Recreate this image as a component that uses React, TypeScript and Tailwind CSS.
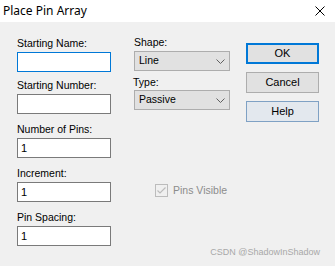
import React from "react";

const ui = { fontFamily: '"Liberation Sans", Arial, sans-serif' };

const fields = [
  { label: "Starting Name:", value: "", focus: true, mt: "mt-[15px]" },
  { label: "Starting Number:", value: "", focus: false, mt: "mt-[7px]" },
  { label: "Number of Pins:", value: "1", focus: false, mt: "mt-[9px]" },
  { label: "Increment:", value: "1", focus: false, mt: "mt-[9px]" },
  { label: "Pin Spacing:", value: "1", focus: false, mt: "mt-[9px]" },
];

const Chevron = () => (
  <svg width="9" height="5" viewBox="0 0 9 5" className="mr-[4px]">
    <path d="M0.5 0.5 L4.5 4.5 L8.5 0.5" fill="none" stroke="#606060" strokeWidth="1" />
  </svg>
);

const Select = ({ value }: { value: string }) => (
  <div className="flex h-[20px] w-[96px] items-center justify-between border border-[#adadad] bg-[#e1e1e1] pl-[4px] text-[10.5px] text-black">
    <span>{value}</span>
    <Chevron />
  </div>
);

const App = () => {
  return (
    <div className="h-[266px] w-[335px] overflow-hidden bg-[#f0f0f0] text-black" style={ui}>
      {/* Title bar */}
      <div className="flex h-[22px] items-center justify-between bg-white pl-[3px] pr-[10px]">
        <span className="text-[12px] leading-none text-black" style={{ fontFamily: '"Noto Sans", "Open Sans", sans-serif' }}>
          Place Pin Array
        </span>
        <svg width="10" height="10" viewBox="0 0 10 10">
          <path d="M0.5 0.5 L9.5 9.5 M9.5 0.5 L0.5 9.5" stroke="#000" strokeWidth="1" />
        </svg>
      </div>

      <div className="relative flex">
        {/* Left column */}
        <div className="ml-[17px] flex w-[94px] flex-col">
          {fields.map((f) => (
            <div key={f.label} className={f.mt}>
              <div className="mb-[2px] text-[10.5px] leading-[13px]">{f.label}</div>
              <div
                className={`flex h-[20px] items-center bg-white pl-[3px] text-[11px] ${
                  f.focus ? "border border-[#0078d7]" : "border border-[#7a7a7a]"
                }`}
              >
                {f.value}
              </div>
            </div>
          ))}
        </div>

        {/* Middle column */}
        <div className="ml-[23px] flex w-[96px] flex-col">
          <div className="mt-[14px] mb-[2px] text-[10.5px] leading-[13px]">Shape:</div>
          <Select value="Line" />
          <div className="mt-[5px] mb-[1px] -ml-[1px] text-[10.5px] leading-[13px]">Type:</div>
          <Select value="Passive" />
          <div className="mt-[74px] ml-[21px] flex items-center gap-[5px]">
            <div className="flex h-[13px] w-[13px] items-center justify-center border border-[#bcbcbc] bg-[#f0f0f0]">
              <svg width="9" height="7" viewBox="0 0 9 7">
                <path d="M0.5 3.5 L3 6 L8.5 0.5" fill="none" stroke="#bcbcbc" strokeWidth="1.2" />
              </svg>
            </div>
            <span className="text-[10.5px] leading-[13px] text-[#8c8c8c]">Pins Visible</span>
          </div>
        </div>

        {/* Buttons */}
        <div className="ml-[16px] flex w-[73px] flex-col gap-[8px] pt-[21px]">
          <button className="flex h-[21px] items-center justify-center border-2 border-[#0078d7] bg-[#e1e1e1] text-[11px]">
            OK
          </button>
          <button className="flex h-[21px] items-center justify-center border border-[#adadad] bg-[#e1e1e1] text-[11px]">
            Cancel
          </button>
          <button className="flex h-[21px] items-center justify-center border border-[#7fa1c4] bg-[#e3e8ee] text-[11px]">
            Help
          </button>
        </div>

        <div className="absolute right-[15px] top-[226px] text-[9px] leading-none text-[#a8a8a8]">
          CSDN @ShadowInShadow
        </div>
      </div>
    </div>
  );
};

export default App;
